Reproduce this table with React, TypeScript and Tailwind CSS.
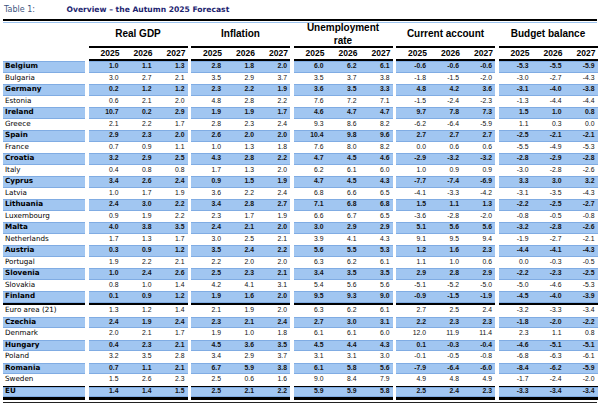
import React from "react";

type Row = { name: string; v: string[]; blue: boolean; bold?: boolean };

const raw: [string, string][] = [
  ["Belgium", "1.0 1.1 1.3 2.8 1.8 2.0 6.0 6.2 6.1 -0.6 -0.6 -0.6 -5.3 -5.5 -5.9"],
  ["Bulgaria", "3.0 2.7 2.1 3.5 2.9 3.7 3.5 3.7 3.8 -1.8 -1.5 -2.0 -3.0 -2.7 -4.3"],
  ["Germany", "0.2 1.2 1.2 2.3 2.2 1.9 3.6 3.5 3.3 4.8 4.2 3.6 -3.1 -4.0 -3.8"],
  ["Estonia", "0.6 2.1 2.0 4.8 2.8 2.2 7.6 7.2 7.1 -1.5 -2.4 -2.3 -1.3 -4.4 -4.4"],
  ["Ireland", "10.7 0.2 2.9 1.9 1.9 1.7 4.6 4.7 4.7 9.7 7.8 7.3 1.5 1.0 0.8"],
  ["Greece", "2.1 2.2 1.7 2.8 2.3 2.4 9.3 8.6 8.2 -6.2 -6.4 -5.9 1.1 0.3 0.0"],
  ["Spain", "2.9 2.3 2.0 2.6 2.0 2.0 10.4 9.8 9.6 2.7 2.7 2.7 -2.5 -2.1 -2.1"],
  ["France", "0.7 0.9 1.1 1.0 1.3 1.8 7.6 8.0 8.2 0.0 0.6 0.6 -5.5 -4.9 -5.3"],
  ["Croatia", "3.2 2.9 2.5 4.3 2.8 2.2 4.7 4.5 4.6 -2.9 -3.2 -3.2 -2.8 -2.9 -2.8"],
  ["Italy", "0.4 0.8 0.8 1.7 1.3 2.0 6.2 6.1 6.0 1.0 0.9 0.9 -3.0 -2.8 -2.6"],
  ["Cyprus", "3.4 2.6 2.4 0.9 1.5 1.9 4.7 4.5 4.3 -7.7 -7.4 -6.9 3.3 3.0 3.2"],
  ["Latvia", "1.0 1.7 1.9 3.6 2.2 2.4 6.8 6.6 6.5 -4.1 -3.3 -4.2 -3.1 -3.5 -4.3"],
  ["Lithuania", "2.4 3.0 2.2 3.4 2.8 2.7 7.1 6.8 6.8 1.5 1.1 1.3 -2.2 -2.5 -2.7"],
  ["Luxembourg", "0.9 1.9 2.2 2.3 1.7 1.9 6.6 6.7 6.5 -3.6 -2.8 -2.0 -0.8 -0.5 -0.8"],
  ["Malta", "4.0 3.8 3.5 2.4 2.1 2.0 3.0 2.9 2.9 5.1 5.6 5.6 -3.2 -2.8 -2.6"],
  ["Netherlands", "1.7 1.3 1.7 3.0 2.5 2.1 3.9 4.1 4.3 9.1 9.5 9.4 -1.9 -2.7 -2.1"],
  ["Austria", "0.3 0.9 1.2 3.5 2.4 2.2 5.6 5.5 5.3 1.2 1.6 2.3 -4.4 -4.1 -4.3"],
  ["Portugal", "1.9 2.2 2.1 2.2 2.0 2.0 6.3 6.2 6.1 1.1 1.0 0.6 0.0 -0.3 -0.5"],
  ["Slovenia", "1.0 2.4 2.6 2.5 2.3 2.1 3.4 3.5 3.5 2.9 2.8 2.9 -2.2 -2.3 -2.5"],
  ["Slovakia", "0.8 1.0 1.4 4.2 4.1 3.1 5.4 5.6 5.6 -5.1 -5.2 -5.0 -5.0 -4.6 -5.3"],
  ["Finland", "0.1 0.9 1.2 1.9 1.6 2.0 9.5 9.3 9.0 -0.9 -1.5 -1.9 -4.5 -4.0 -3.9"],
];

const raw2: [string, string][] = [
  ["Euro area (21)", "1.3 1.2 1.4 2.1 1.9 2.0 6.3 6.2 6.1 2.7 2.5 2.4 -3.2 -3.3 -3.4"],
  ["Czechia", "2.4 1.9 2.4 2.3 2.1 2.4 2.7 3.0 3.1 2.2 2.3 2.3 -1.8 -2.0 -2.2"],
  ["Denmark", "2.0 2.1 1.7 1.9 1.0 1.8 6.1 6.1 6.0 12.0 11.9 11.4 2.3 1.1 0.8"],
  ["Hungary", "0.4 2.3 2.1 4.5 3.6 3.5 4.5 4.4 4.3 0.1 -0.3 -0.4 -4.6 -5.1 -5.1"],
  ["Poland", "3.2 3.5 2.8 3.4 2.9 3.7 3.1 3.1 3.0 -0.1 -0.5 -0.8 -6.8 -6.3 -6.1"],
  ["Romania", "0.7 1.1 2.1 6.7 5.9 3.8 6.1 5.8 5.6 -7.9 -6.4 -6.0 -8.4 -6.2 -5.9"],
  ["Sweden", "1.5 2.6 2.3 2.5 0.6 1.6 9.0 8.4 7.9 4.9 4.8 4.9 -1.7 -2.4 -2.0"],
];

const top: Row[] = raw.map(([name, s], i) => ({ name, v: s.split(" "), blue: i % 2 === 0 }));
const bottom: Row[] = raw2.map(([name, s], i) => ({ name, v: s.split(" "), blue: i % 2 === 1 }));
const eu: Row = {
  name: "EU",
  v: "1.4 1.4 1.5 2.5 2.1 2.2 5.9 5.9 5.8 2.5 2.4 2.3 -3.3 -3.4 -3.4".split(" "),
  blue: true,
  bold: true,
};

const GRID = "grid grid-cols-[82px_repeat(5,99px)] gap-x-[3.5px] pl-[3px]";
const BLUE = "bg-[#a1c6f1] border-y border-[#80ace3]";
const numFont = { fontFamily: '"Liberation Sans", Arial, sans-serif' };
const nameFont = { fontFamily: '"DejaVu Sans", Verdana, sans-serif' };

function DataRow({ r, h }: { r: Row; h: string }) {
  const cell = `${h} ${r.blue ? BLUE : ""}`;
  const weight = r.blue ? "font-bold" : "font-normal";
  return (
    <div className={GRID}>
      <div
        className={`${cell} ${weight} flex items-center pl-[2px] text-[7.2px] text-black whitespace-nowrap`}
        style={nameFont}
      >
        {r.name}
      </div>
      {[0, 1, 2, 3, 4].map((g) => (
        <div key={g} className={`${cell} grid grid-cols-3 items-center`}>
          {[0, 1, 2].map((k) => (
            <div
              key={k}
              className={`text-right pr-[3px] text-[6.8px] leading-none text-[#111] ${weight}`}
              style={numFont}
            >
              {r.v[g * 3 + k]}
            </div>
          ))}
        </div>
      ))}
    </div>
  );
}

export default function App() {
  const groups: React.ReactNode[] = [
    "Real GDP",
    "Inflation",
    <>
      Unemployment
      <br />
      rate
    </>,
    "Current account",
    "Budget balance",
  ];
  return (
    <div className="w-[600px] h-[403px] bg-white overflow-hidden">
      {/* Title */}
      <div className="h-[19px] flex items-center pl-[4px] text-[8px] whitespace-nowrap" style={nameFont}>
        <span className="w-[62.5px] text-[#3d5580]">Table 1:</span>
        <span className="font-bold text-[#1c2470] text-[7.6px]">Overview – the Autumn 2025 Forecast</span>
      </div>
      <div className="ml-[3px] mr-[3px] h-[2px] bg-black" />
      <div className="ml-[3px] mr-[3px] mt-[1px] h-[1px] bg-[#9cc3ee]" />

      {/* Header */}
      <div className={GRID}>
        <div />
        {groups.map((g, i) => (
          <div key={i} className="flex flex-col">
            <div
              className="h-[25px] border-b-2 border-black flex items-center justify-center text-center font-bold text-[10px] leading-[12.5px] text-black"
              style={numFont}
            >
              <div>{g}</div>
            </div>
            <div className="h-[13px] border-b-2 border-black grid grid-cols-3 items-center">
              {["2025", "2026", "2027"].map((y) => (
                <div
                  key={y}
                  className="text-right pr-[2px] font-bold text-[8.5px] leading-none text-black"
                  style={numFont}
                >
                  {y}
                </div>
              ))}
            </div>
          </div>
        ))}
      </div>

      {/* Euro area countries */}
      {top.map((r) => (
        <DataRow key={r.name} r={r} h="h-[11.5px]" />
      ))}
      <div className={GRID}>
        {[0, 1, 2, 3, 4, 5].map((i) => (
          <div key={i} className="h-[2.5px] bg-black" />
        ))}
      </div>
      {bottom.map((r) => (
        <DataRow key={r.name} r={r} h="h-[11.5px]" />
      ))}

      {/* EU */}
      <div className={GRID}>
        {[0, 1, 2, 3, 4, 5].map((i) => (
          <div key={i} className="h-[1px] bg-black" />
        ))}
      </div>
      <DataRow r={eu} h="h-[10px]" />
      <div className={GRID}>
        {[0, 1, 2, 3, 4, 5].map((i) => (
          <div key={i} className="h-[3px] bg-black" />
        ))}
      </div>
      <div className="ml-[3px] mr-[3px] mt-[2.5px] h-[1px] bg-[#222]" />
    </div>
  );
}
